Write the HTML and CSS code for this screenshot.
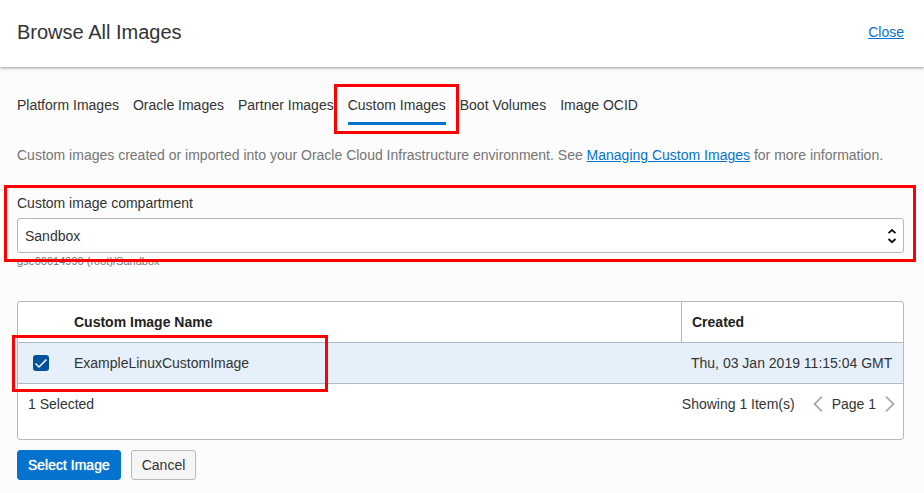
FILE: index.html
```html
<!DOCTYPE html>
<html lang="en">
<head>
<meta charset="utf-8">
<title>Browse All Images</title>
<link rel="stylesheet" href="styles.css">
</head>
<body>
<header class="header">
  <h1 class="title">Browse All Images</h1>
  <a class="link" href="#close">Close</a>
</header>
<main class="content">
  <nav class="tabs">
    <a class="tab" href="#platform">Platform Images</a>
    <a class="tab" href="#oracle">Oracle Images</a>
    <a class="tab" href="#partner">Partner Images</a>
    <a class="tab tab-active" href="#custom">Custom Images<span class="mark mark-tab"></span></a>
    <a class="tab" href="#boot">Boot Volumes</a>
    <a class="tab" href="#ocid">Image OCID</a>
  </nav>
  <p class="intro">Custom images created or imported into your Oracle Cloud Infrastructure environment. See <a class="link" href="#managing">Managing Custom Images</a> for more information.</p>
  <section class="field">
    <label class="label" for="compartment">Custom image compartment</label>
    <div class="select-wrap">
      <select class="select" id="compartment"><option>Sandbox</option></select>
      <svg class="select-icon" width="10" height="16" viewBox="0 0 10 16" aria-hidden="true"><path d="M1.5 5.2 5 2 8.5 5.2M1.5 11 5 14.2 8.5 11"/></svg>
    </div>
    <div class="hint">gse00014990 (root)/Sandbox</div>
    <span class="mark mark-field"></span>
  </section>
  <section class="panel">
    <table class="table">
      <thead>
        <tr><th class="col-check"></th><th class="col-name">Custom Image Name</th><th class="col-date">Created</th></tr>
      </thead>
      <tbody>
        <tr>
          <td class="col-check"><input class="check" type="checkbox" id="row1" checked></td>
          <td class="col-name"><label for="row1">ExampleLinuxCustomImage</label></td>
          <td class="col-date">Thu, 03 Jan 2019 11:15:04 GMT</td>
        </tr>
      </tbody>
    </table>
    <div class="footer">
      <span>1 Selected</span>
      <div class="pager">
        <span class="count">Showing 1 Item(s)</span>
        <button class="page-button" type="button" aria-label="Previous page"><svg width="10" height="16" viewBox="0 0 10 16"><path d="M9 .7 1.5 8 9 15.3"/></svg></button>
        <span>Page 1</span>
        <button class="page-button" type="button" aria-label="Next page"><svg width="10" height="16" viewBox="0 0 10 16"><path d="M1 .7 8.5 8 1 15.3"/></svg></button>
      </div>
    </div>
    <span class="mark mark-row"></span>
  </section>
  <div class="actions">
    <button class="button button-primary" type="button">Select Image</button>
    <button class="button" type="button">Cancel</button>
  </div>
</main>
</body>
</html>
```
FILE: styles.css
```css
* {
  box-sizing: border-box;
}

body {
  margin: 0;
  background: #fcfcfc;
  color: #333;
  font: 14px/20px "Liberation Sans", Arial, sans-serif;
}

.header {
  display: flex;
  align-items: center;
  justify-content: space-between;
  padding: 20px 20px 23px 17px;
  background: #fff;
  box-shadow: 0 1px 3px rgba(0, 0, 0, 0.4);
}

.title {
  margin: 0;
  font-size: 20px;
  font-weight: 400;
  line-height: 24px;
}

.link {
  color: #0572ce;
}

.content {
  padding: 28px 20px 12px 17px;
}

.tabs {
  display: flex;
  gap: 14px;
}

.tab {
  padding-bottom: 7px;
  border-bottom: 3px solid transparent;
  color: #333;
  text-decoration: none;
  white-space: nowrap;
}

.tab-active {
  position: relative;
  border-bottom-color: #0572ce;
}

.intro {
  margin: 20px 0 28px;
  color: #757575;
}

.field {
  position: relative;
  margin-bottom: 32px;
}

.label {
  display: block;
  margin-bottom: 5px;
}

.select-wrap {
  position: relative;
}

.select {
  display: block;
  width: 100%;
  height: 35px;
  padding: 0 28px 0 7px;
  appearance: none;
  background: #fff;
  border: 1px solid #b3b9c3;
  border-radius: 3px;
  color: #333;
  font: inherit;
}

.select-icon {
  position: absolute;
  top: 10px;
  right: 7px;
  fill: none;
  stroke: #111;
  stroke-width: 1.8;
  pointer-events: none;
}

.hint {
  padding: 1px 0;
  color: #757575;
  font-size: 11px;
  line-height: 14px;
}

.panel {
  position: relative;
  background: #fff;
  border: 1px solid #b3b9c3;
  border-radius: 3px;
}

.table {
  width: 100%;
  border-collapse: separate;
  border-spacing: 0;
}

.table th,
.table td {
  height: 41px;
  padding: 0 10px;
  border-bottom: 1px solid #b3b9c3;
  text-align: left;
}

.table th {
  color: #222;
}

.table td {
  background: #e6f0fa;
}

.table .col-check {
  width: 46px;
  padding: 0 15px;
}

.table .col-date {
  width: 222px;
  white-space: nowrap;
}

.table th.col-date {
  border-left: 1px solid #b3b9c3;
}

.check {
  display: block;
  width: 16px;
  height: 16px;
  margin: 0;
  appearance: none;
  background: #00529b url("data:image/svg+xml,%3Csvg xmlns='http://www.w3.org/2000/svg' viewBox='0 0 16 16'%3E%3Cpath d='M2.5 8.5 6 12 13.5 4.5' fill='none' stroke='white' stroke-width='1.5'/%3E%3C/svg%3E");
  border-radius: 3px;
}

.footer {
  display: flex;
  justify-content: space-between;
  padding: 10px 8px 25px 10px;
}

.pager {
  display: flex;
  align-items: center;
  gap: 9px;
}

.count {
  margin-right: 9px;
}

.page-button {
  display: flex;
  padding: 0;
  background: none;
  border: 0;
}

.page-button svg {
  fill: none;
  stroke: #aaa;
  stroke-width: 1.8;
}

.actions {
  display: flex;
  gap: 10px;
  margin-top: 10px;
}

.button {
  height: 30px;
  padding: 0 10px;
  background: #f5f5f5;
  border: 1px solid #b3b9c3;
  border-radius: 3px;
  color: #333;
  font: inherit;
}

.button-primary {
  background: #0572ce;
  border-color: #0572ce;
  color: #fff;
  text-shadow: 0 0 1px #fff;
}

.mark {
  position: absolute;
  z-index: 1;
  border: 3px solid #f00;
  pointer-events: none;
}

.mark-tab {
  inset: -11px -13px -12px -14px;
}

.mark-field {
  inset: -8px -12px 7px -13px;
}

.mark-row {
  top: 33px;
  left: -6px;
  width: 316px;
  height: 57px;
}
```
